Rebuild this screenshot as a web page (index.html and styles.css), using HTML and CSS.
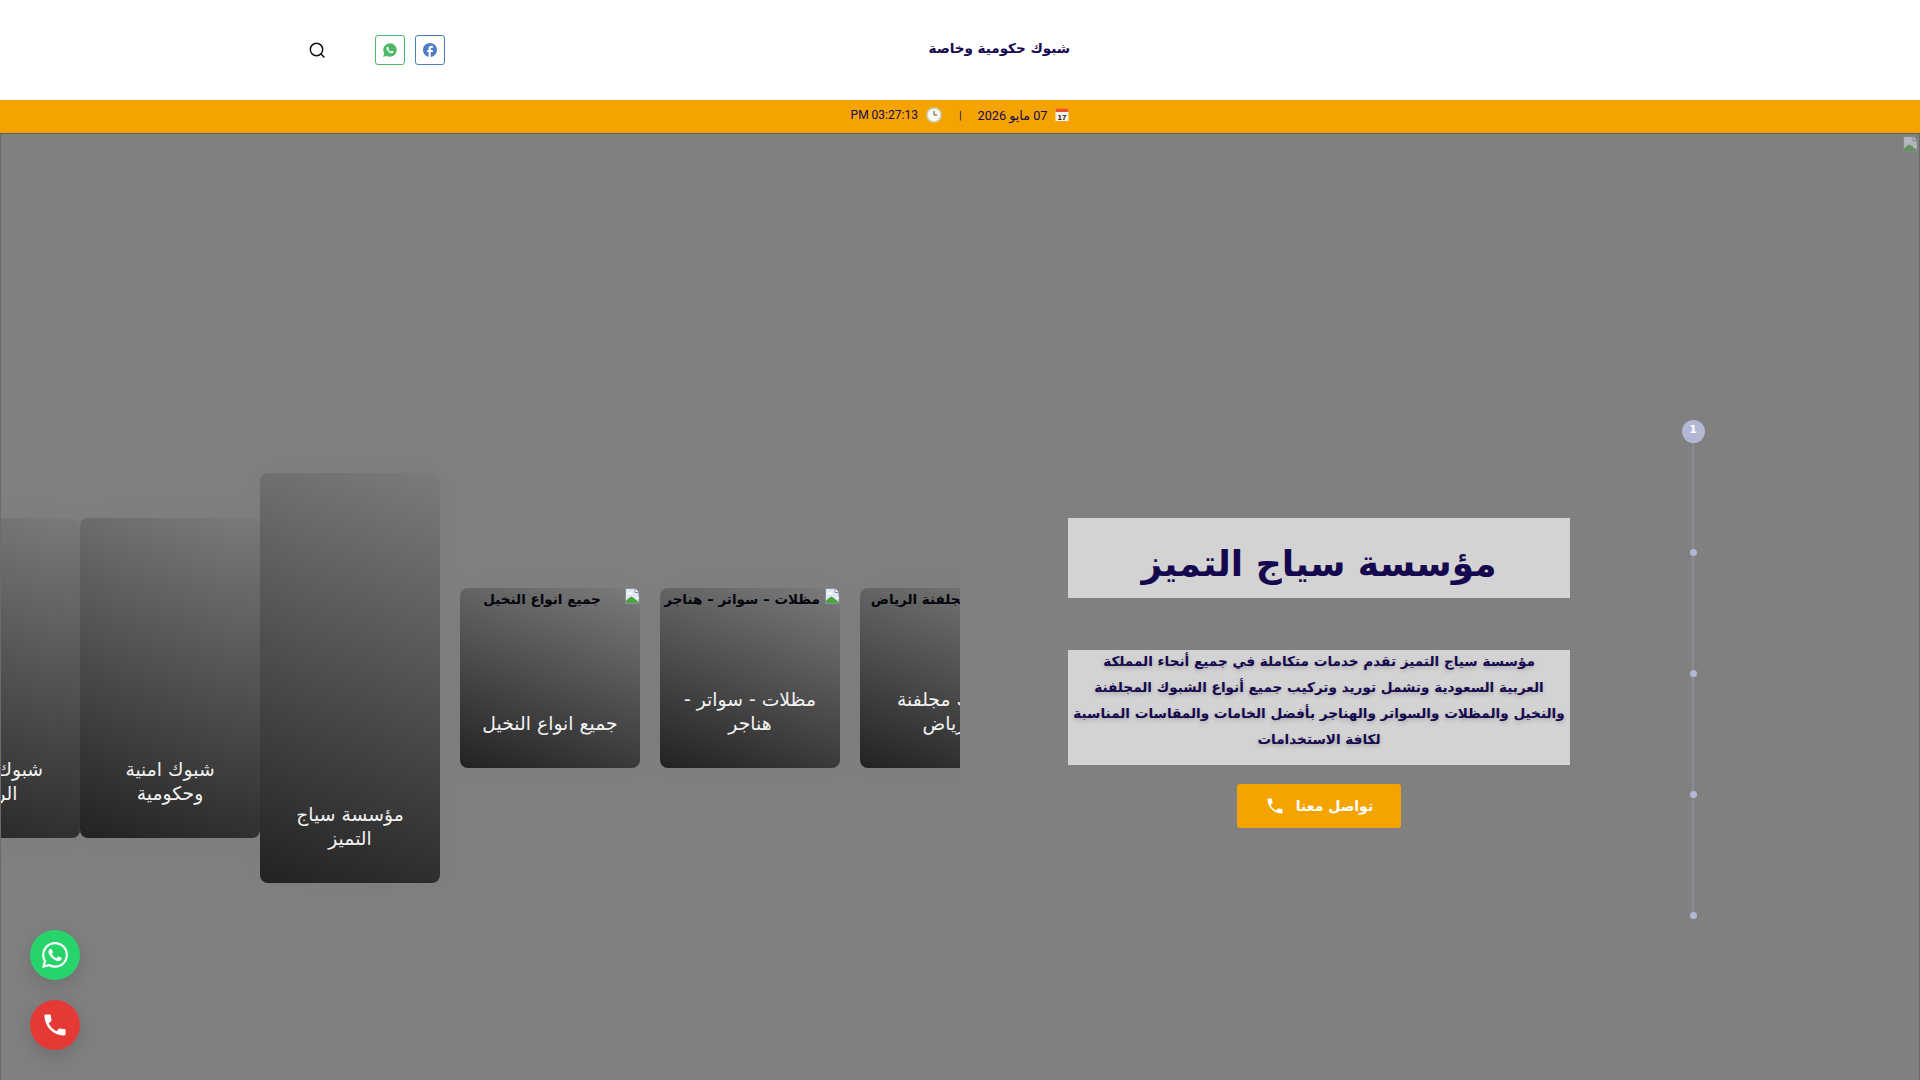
FILE: index.html
```html
<!DOCTYPE html>
<html lang="ar" dir="rtl">
<head>
<meta charset="utf-8">
<title>مؤسسة سياج التميز</title>
<link rel="stylesheet" href="styles.css">
</head>
<body>
<header class="topbar">
  <div class="tagline">شبوك حكومية وخاصة</div>
  <div class="tools">
    <a class="social social-fb"><svg viewBox="2 2 20 20" width="14" height="14"><path fill="#4f7cc2" d="M22 12c0-5.520-4.480-10-10-10S2 6.480 2 12c0 4.840 3.440 8.870 8 9.800V15H8v-3h2V9.500C10 7.570 11.570 6 13.500 6H16v3h-2c-.55 0-1 .45-1 1v2h3v3h-3v6.950c5.050-.5 9-4.760 9-9.950z"/></svg></a>
    <a class="social social-wa"><svg viewBox="0 0 24 24" width="14" height="14"><path fill="#4fb868" d="M12 0.500C5.600 .5.500 5.600.5 12c0 2.100.6 4.100 1.600 5.800L.3 23.700l6.100-1.600c1.700.9 3.600 1.400 5.600 1.400 6.400 0 11.500-5.100 11.500-11.500S18.400.500 12 .5z"/><path fill="#fff" d="M17.472 14.382c-.297-.149-1.758-.867-2.03-.967-.273-.099-.471-.148-.67.15-.197.297-.767.966-.94 1.164-.173.199-.347.223-.644.075-.297-.15-1.255-.463-2.39-1.475-.883-.788-1.48-1.761-1.653-2.059-.173-.297-.018-.458.13-.606.134-.133.298-.347.446-.52.149-.174.198-.298.298-.497.099-.198.05-.371-.025-.52-.075-.149-.669-1.612-.916-2.207-.242-.579-.487-.5-.669-.51-.173-.008-.371-.01-.57-.01-.198 0-.52.074-.792.372-.272.297-1.04 1.016-1.04 2.479 0 1.462 1.065 2.875 1.213 3.074.149.198 2.096 3.2 5.077 4.487.709.306 1.262.489 1.694.625.712.227 1.36.195 1.871.118.571-.085 1.758-.719 2.006-1.413.248-.694.248-1.289.173-1.413-.074-.124-.272-.198-.57-.347"/></svg></a>
    <a class="search"><svg viewBox="0 0 18 18" width="18" height="18" fill="none" stroke="#111" stroke-width="1.5" stroke-linecap="round"><circle cx="8.500" cy="8.500" r="6.200"/><path d="M13 13l3 3"/></svg></a>
  </div>
</header>

<div class="datebar">
  <svg class="emoji emoji-cal" viewBox="0 0 14 14" width="14" height="14"><rect x=".5" y="2" width="13" height="12" fill="#f6f3ea"/><path d="M.5 5V1.500l1.300.6 1.300-.6 1.300.6 1.300-.6 1.300.6 1.300-.6 1.300.6 1.300-.6 1.300.6 1.300-.6V5z" fill="#e8512f"/><text x="7" y="12.500" text-anchor="middle" class="emoji-num">17</text></svg>
  <span class="date-text date-long">07 مايو 2026</span>
  <span class="sep">|</span>
  <svg class="emoji" viewBox="0 0 16 16" width="16" height="16"><circle cx="8" cy="8" r="7.800" fill="#c4d3bd"/><circle cx="8" cy="8" r="6.200" fill="#fbf8ef"/><path d="M8 3.800V8h3.200" fill="none" stroke="#5b3a20" stroke-width=".9"/></svg>
  <span class="date-text">03:27:13 PM</span>
</div>

<main class="hero">
  <svg class="broken broken-hero" viewBox="0 0 16 16" width="16" height="16"><use href="#broken-icon"/></svg>

  <section class="strip-col">
    <div class="strip">
      <article class="card card-mid"><p class="card-text">شبوك مجلفنة الرياض</p></article>
      <article class="card card-mid"><p class="card-text">شبوك امنية وحكومية</p></article>
      <article class="card card-main"><p class="card-text">مؤسسة سياج التميز</p></article>
      <article class="card card-small">
        <div class="alt"><svg class="broken" viewBox="0 0 16 16" width="16" height="16"><use href="#broken-icon"/></svg><span>جميع انواع النخيل</span></div>
        <p class="card-text">جميع انواع النخيل</p>
      </article>
      <article class="card card-small">
        <div class="alt"><svg class="broken" viewBox="0 0 16 16" width="16" height="16"><use href="#broken-icon"/></svg><span>مظلات – سواتر – هناجر</span></div>
        <p class="card-text">مظلات - سواتر - هناجر</p>
      </article>
      <article class="card card-small">
        <div class="alt"><svg class="broken" viewBox="0 0 16 16" width="16" height="16"><use href="#broken-icon"/></svg><span>شبوك مجلفنة الرياض</span></div>
        <p class="card-text">شبوك مجلفنة الرياض</p>
      </article>
    </div>
  </section>

  <section class="info-col">
    <div class="info">
      <h1 class="title">مؤسسة سياج التميز</h1>
      <div class="desc"><p class="desc-text">مؤسسة سياج التميز تقدم خدمات متكاملة في جميع أنحاء المملكة<br>العربية السعودية وتشمل توريد وتركيب جميع أنواع الشبوك المجلفنة<br>والنخيل والمظلات والسواتر والهناجر بأفضل الخامات والمقاسات المناسبة<br>لكافة الاستخدامات</p></div>
      <a class="cta"><span>تواصل معنا</span><svg viewBox="0 0 24 24" width="20" height="20"><path fill="#fff" d="M6.620 10.790c1.440 2.830 3.760 5.140 6.590 6.590l2.200-2.200c.27-.27.67-.36 1.020-.24 1.120.37 2.330.57 3.570.57.55 0 1 .45 1 1V20c0 .55-.45 1-1 1-9.390 0-17-7.610-17-17 0-.55.45-1 1-1h3.500c.55 0 1 .45 1 1 0 1.250.2 2.450.57 3.570.11.35.03.74-.25 1.020l-2.200 2.200z"/></svg></a>
    </div>
    <ol class="timeline">
      <li class="step"><span class="step-num">1</span></li>
      <li class="step"><span class="step-dot"></span></li>
      <li class="step"><span class="step-dot"></span></li>
      <li class="step"><span class="step-dot"></span></li>
      <li class="step"><span class="step-dot"></span></li>
    </ol>
  </section>

  <a class="float float-wa"><svg viewBox="0 0 24 24" width="26" height="26"><path fill="#fff" d="M17.472 14.382c-.297-.149-1.758-.867-2.03-.967-.273-.099-.471-.148-.67.15-.197.297-.767.966-.94 1.164-.173.199-.347.223-.644.075-.297-.15-1.255-.463-2.39-1.475-.883-.788-1.48-1.761-1.653-2.059-.173-.297-.018-.458.13-.606.134-.133.298-.347.446-.52.149-.174.198-.298.298-.497.099-.198.05-.371-.025-.52-.075-.149-.669-1.612-.916-2.207-.242-.579-.487-.5-.669-.51-.173-.008-.371-.01-.57-.01-.198 0-.52.074-.792.372-.272.297-1.04 1.016-1.04 2.479 0 1.462 1.065 2.875 1.213 3.074.149.198 2.096 3.2 5.077 4.487.709.306 1.262.489 1.694.625.712.227 1.36.195 1.871.118.571-.085 1.758-.719 2.006-1.413.248-.694.248-1.289.173-1.413-.074-.124-.272-.198-.57-.347m-5.421 7.403h-.004a9.870 9.870 0 01-5.031-1.378l-.361-.214-3.741.982.998-3.648-.235-.374a9.860 9.860 0 01-1.510-5.260c.001-5.450 4.436-9.884 9.888-9.884 2.640 0 5.122 1.030 6.988 2.898a9.825 9.825 0 012.893 6.994c-.003 5.450-4.437 9.884-9.885 9.884m8.413-18.297A11.815 11.815 0 0012.050 0C5.495 0 .16 5.335.157 11.892c0 2.096.547 4.142 1.588 5.945L.057 24l6.305-1.654a11.882 11.882 0 005.683 1.448h.005c6.554 0 11.890-5.335 11.893-11.893a11.821 11.821 0 00-3.480-8.413z"/></svg></a>
  <a class="float float-call"><svg viewBox="0 0 24 24" width="28" height="28"><path fill="#fff" d="M6.620 10.790c1.440 2.830 3.760 5.140 6.590 6.590l2.200-2.200c.27-.27.67-.36 1.020-.24 1.120.37 2.330.57 3.570.57.55 0 1 .45 1 1V20c0 .55-.45 1-1 1-9.390 0-17-7.610-17-17 0-.55.45-1 1-1h3.500c.55 0 1 .45 1 1 0 1.250.2 2.450.57 3.570.11.35.03.74-.25 1.020l-2.200 2.200z"/></svg></a>
</main>

<svg class="defs" width="0" height="0">
  <symbol id="broken-icon" viewBox="0 0 16 16">
    <path d="M1.500 .5h9.500l4 4v11h-13.500z" fill="#dfe6f4" stroke="#8a8f98" stroke-width="1"/>
    <path d="M11 .5v4h4" fill="#fff" stroke="#8a8f98" stroke-width="1"/>
    <path d="M2 6.500c1-2 2-2 3-1.500 1-1 3-1 3.500.5-1 .6-5 1-6.500 1z" fill="#fff"/>
    <path d="M2 15v-2.500l5-4 3 1.500 4 3.500 1 1.500z" fill="#4aa53c"/>
    <path d="M11 10l4-1v2l-3 .5z" fill="#fff"/>
  </symbol>
</svg>
</body>
</html>
```

FILE: styles.css
```css
* { box-sizing: border-box; }
html, body { margin: 0; padding: 0; height: 100%; }
body {
  width: 1920px;
  height: 1080px;
  overflow: hidden;
  font-family: "DejaVu Sans", sans-serif;
  display: flex;
  flex-direction: column;
  background: #fff;
  color: #15084f;
}
.defs { position: absolute; }

.topbar {
  height: 100px;
  flex: none;
  background: #fff;
  display: flex;
  align-items: center;
  justify-content: space-between;
  padding: 0 850px 0 308px;
}
.tagline { font-size: 13.500px; font-weight: 700; color: #15084f; margin-top: -5px; }
.tools { display: flex; align-items: center; }
.social {
  width: 30px;
  height: 30px;
  border-radius: 3px;
  display: flex;
  align-items: center;
  justify-content: center;
  background: #fff;
}
.social-fb { border: 1px solid #4f7cc2; margin-left: 10px; }
.social-wa { border: 1px solid #4fb868; margin-left: 49px; }
.search { width: 18px; height: 18px; display: block; }

.datebar {
  height: 33px;
  flex: none;
  background: #f5a300;
  display: flex;
  align-items: center;
  justify-content: center;
  font-family: Roboto, "DejaVu Sans", sans-serif;
  font-size: 12px;
  color: #15084f;
  padding-bottom: 3px;
}
.date-text { white-space: nowrap; }
.date-long { font-size: 12.700px; }
.sep { margin: 0 16px 0 17px; font-size: 11px; }
.emoji { flex: none; margin-left: 8px; }
.emoji-cal { margin-top: -3px; }
.emoji-num { font-family: "Liberation Sans", sans-serif; font-size: 8px; font-weight: 700; fill: #222; }

.hero {
  position: relative;
  flex: 1;
  direction: ltr;
  background: #808080;
  border-top: 1px solid #5d5d5d;
  border-right: 1px solid #6b6b6b;
  border-left: 1px solid #6b6b6b;
  display: flex;
}
.broken-hero { position: absolute; top: 2px; right: 1px; opacity: .5; }

.strip-col {
  width: 959px;
  flex: none;
  overflow: hidden;
  padding-top: 339px;
  height: 760px;
}
.strip {
  display: flex;
  align-items: center;
  width: 1300px;
  margin-left: -101px;
  height: 410px;
}
.card {
  flex: none;
  width: 180px;
  border-radius: 8px;
  overflow: hidden;
  position: relative;
  direction: rtl;
  display: flex;
  flex-direction: column;
  justify-content: flex-end;
  background: linear-gradient(20deg, #222 0%, rgba(34,34,34,.05) 100%);
  box-shadow: 0 0 40px rgba(0,0,0,.03);
}
.card-main { height: 410px; margin-right: 20px; }
.card-mid { height: 320px; }
.card-small { height: 180px; margin-right: 20px; }
.card-text {
  margin: 0;
  padding: 0 20px 32px;
  text-align: center;
  color: #f2f2f2;
  font-size: 18.800px;
  line-height: 24px;
}
.alt {
  position: absolute;
  top: 0;
  right: 0;
  left: 0;
  display: flex;
  align-items: flex-start;
  white-space: nowrap;
  color: #05050d;
  font-weight: 700;
  font-size: 13.500px;
  line-height: 22px;
}
.alt span { display: block; flex: 1; text-align: center; }
.broken { flex: none; display: block; }

.info-col {
  flex: 1;
  display: flex;
  padding: 285px 0 0 108px;
}
.info {
  width: 502px;
  margin: 99px 111px 0 0;
  display: flex;
  flex-direction: column;
  align-items: center;
  direction: rtl;
}
.title {
  width: 100%;
  height: 80px;
  margin: 0;
  background: #d3d3d3;
  text-align: center;
  font-size: 36px;
  line-height: 92px;
  font-weight: 700;
  color: #15084f;
}
.desc {
  width: 100%;
  height: 115px;
  margin: 52px 0 0;
  background: #d3d3d3;
  display: flow-root;
}
.desc-text {
  margin: -2px 0 0;
  text-align: center;
  font-size: 13.600px;
  font-weight: 700;
  line-height: 26px;
  white-space: nowrap;
  color: #15084f;
  text-shadow: 0 2px 4px rgba(0,0,0,.2);
}
.cta {
  margin-top: 19px;
  width: 164px;
  height: 44px;
  background: #f5a300;
  border-radius: 3px;
  color: #fff;
  display: flex;
  align-items: center;
  justify-content: center;
  gap: 11px;
  font-size: 14px;
  font-weight: 700;
}
.timeline {
  list-style: none;
  margin: 0;
  padding: 0;
  display: flex;
  flex-direction: column;
  gap: 97px;
  position: relative;
  height: 508px;
}
.timeline::before {
  content: "";
  position: absolute;
  top: 12px;
  bottom: 12px;
  left: 11px;
  width: 2px;
  background: #8b8b96;
}
.step {
  position: relative;
  width: 24px;
  height: 24px;
  display: flex;
  align-items: center;
  justify-content: center;
}
.step-num {
  width: 23px;
  height: 23px;
  border-radius: 50%;
  background: #b2b8d4;
  color: #fff;
  font-size: 11px;
  font-weight: 700;
  text-align: center;
  line-height: 19px;
}
.step-dot { width: 7px; height: 7px; border-radius: 50%; background: #b2b8d4; }

.float {
  position: absolute;
  left: 29px;
  width: 50px;
  height: 50px;
  border-radius: 50%;
  display: flex;
  align-items: center;
  justify-content: center;
  box-shadow: 0 6px 20px rgba(0,0,0,.15);
}
.float-wa { top: 796px; background: #27d46c; }
.float-call { top: 866px; background: #e53935; }
```
